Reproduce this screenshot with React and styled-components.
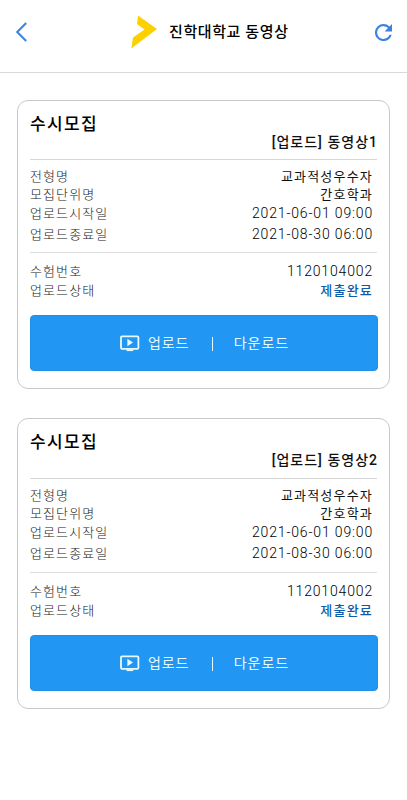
import React from 'react';
import styled, { createGlobalStyle } from 'styled-components';

const GlobalStyle = createGlobalStyle`
  * { box-sizing: border-box; }
  body {
    margin: 0;
    background: #fff;
    color: #111;
    font-family: Roboto, 'Noto Sans CJK KR', sans-serif;
  }
`;

const Screen = styled.div`
  min-height: 800px;
  background: #fff;
`;

const Header = styled.header`
  display: grid;
  grid-template-columns: 44px 1fr 44px;
  align-items: center;
  height: 73px;
  padding-bottom: 8px;
  border-bottom: 1px solid #d9d9d9;
`;

const IconButton = styled.button`
  display: flex;
  justify-content: ${(p) => (p.$end ? 'flex-end' : 'flex-start')};
  padding: 0 15px;
  border: 0;
  background: none;
  color: #3b82dc;

  svg { flex: none; }
`;

const Brand = styled.div`
  display: flex;
  align-items: center;
  gap: 11px;
  padding-left: 87px;
`;

const BrandName = styled.h1`
  margin: 0;
  font-size: 15px;
  font-weight: 500;
  line-height: 22px;
  letter-spacing: 0.6px;
  white-space: nowrap;
  color: #000;
`;

const List = styled.main`
  display: flex;
  flex-direction: column;
  gap: 29px;
  padding: 27px 17px 0 17px;
`;

const Card = styled.article`
  height: ${(p) => p.$height}px;
  padding: 12px 11px 0 12px;
  border: 1px solid #c9c9c9;
  border-radius: 11px;
`;

const CardHead = styled.div`
  display: flex;
  flex-direction: column;
  height: ${(p) => p.$height}px;
  margin-right: 1px;
  border-bottom: 1px solid #d6d6d6;
`;

const CardTitle = styled.h2`
  margin: 0;
  font-size: 17px;
  font-weight: 500;
  line-height: 22px;
  letter-spacing: 1.4px;
  color: #000;
`;

const CardSubtitle = styled.div`
  margin: -3px -1px 0 0;
  font-size: 14px;
  font-weight: 500;
  line-height: 20px;
  letter-spacing: 1px;
  text-align: right;
`;

const Group = styled.dl`
  margin: 0 1px 0 0;
  padding: ${(p) => p.$padding};
  border-bottom: ${(p) => (p.$divided ? '1px solid #dedede' : '0')};
`;

const Row = styled.div`
  display: flex;
  justify-content: space-between;
  align-items: center;
  height: ${(p) => p.$height}px;
  padding-right: 4px;
`;

const Label = styled.dt`
  font-size: 13px;
  font-weight: 300;
  line-height: 18px;
  letter-spacing: 1.1px;
  color: #222;
`;

const Value = styled.dd`
  margin: ${(p) => (p.$numeric ? '0 0 2px' : '0')};
  font-size: ${(p) => (p.$numeric ? 14 : 13)}px;
  font-weight: ${(p) => (p.$status ? 500 : p.$numeric ? 300 : 400)};
  line-height: 18px;
  letter-spacing: ${(p) => (p.$numeric ? 0.84 : 1.2)}px;
  color: ${(p) => (p.$status ? '#0b5cad' : p.$numeric ? '#000' : '#111')};
`;

const ActionBar = styled.div`
  display: flex;
  align-items: center;
  height: 56px;
  padding-left: 89px;
  border: 1px solid #1f8ee6;
  border-radius: 4px;
  background: #2196f3;
  color: #e6fbff;
`;

const Action = styled.button`
  display: flex;
  align-items: center;
  gap: 8px;
  padding: 0;
  border: 0;
  background: none;
  color: inherit;
  font: 400 14px/20px Roboto, 'Noto Sans CJK KR', sans-serif;
  letter-spacing: 0.9px;
`;

const Separator = styled.span`
  width: 1px;
  height: 14px;
  margin: 2px 20.5px 0 23px;
  background: #e6fbff;
`;

const BackIcon = () => (
  <svg width="12" height="20" viewBox="0 0 12 20" fill="none" stroke="currentColor" strokeWidth="2">
    <path d="M11.2 1 2.2 10l9 9" />
  </svg>
);

const RefreshIcon = () => (
  <svg width="17" height="17" viewBox="4 4 16 16" fill="currentColor">
    <path d="M17.65 6.35A7.96 7.96 0 0 0 12 4a8 8 0 1 0 7.73 10h-2.08A6 6 0 1 1 12 6c1.66 0 3.14.69 4.22 1.78L13 11h7V4l-2.35 2.35z" />
  </svg>
);

const BrandMark = () => (
  <svg width="27" height="34" viewBox="0 0 27 34" fill="#fdd000">
    <path d="M7 .5 26 14 .3 33.5 2 22.5 13.5 14.5 6 9z" />
  </svg>
);

const VideoIcon = () => (
  <svg width="20" height="17" viewBox="0 0 20 17" fill="none" stroke="currentColor" strokeWidth="1.8">
    <rect x="1" y="1.4" width="17.4" height="12.4" rx="1" />
    <path d="M6.6 15.2h6.6" />
    <path d="M7.4 3.8v7.4l5.6-3.7z" fill="currentColor" stroke="none" />
  </svg>
);

const details = [
  { label: '전형명', value: '교과적성우수자', height: 18 },
  { label: '모집단위명', value: '간호학과', height: 18 },
  { label: '업로드시작일', value: '2021-06-01 09:00', height: 20, numeric: true },
  { label: '업로드종료일', value: '2021-08-30 06:00', height: 21, numeric: true },
];

const submission = [
  { label: '수험번호', value: '1120104002', height: 19, numeric: true },
  { label: '업로드상태', value: '제출완료', height: 20, status: true },
];

const videos = [
  { name: '동영상1', height: 289, headHeight: 47, detailPadding: '8px 0 7px', statusPadding: '9px 0 14px' },
  { name: '동영상2', height: 291, headHeight: 48, detailPadding: '8px 0 8px', statusPadding: '9px 0 14px' },
];

const renderRow = (r) => (
  <Row key={r.label} $height={r.height}>
    <Label>{r.label}</Label>
    <Value $numeric={r.numeric} $status={r.status}>{r.value}</Value>
  </Row>
);

function VideoCard({ video }) {
  return (
    <Card $height={video.height}>
      <CardHead $height={video.headHeight}>
        <CardTitle>수시모집</CardTitle>
        <CardSubtitle>[업로드] {video.name}</CardSubtitle>
      </CardHead>
      <Group $divided $padding={video.detailPadding}>{details.map(renderRow)}</Group>
      <Group $padding={video.statusPadding}>{submission.map(renderRow)}</Group>
      <ActionBar>
        <Action><VideoIcon />업로드</Action>
        <Separator />
        <Action>다운로드</Action>
      </ActionBar>
    </Card>
  );
}

export default function App() {
  return (
    <Screen>
      <GlobalStyle />
      <Header>
        <IconButton aria-label="뒤로"><BackIcon /></IconButton>
        <Brand>
          <BrandMark />
          <BrandName>진학대학교 동영상</BrandName>
        </Brand>
        <IconButton $end aria-label="새로고침"><RefreshIcon /></IconButton>
      </Header>
      <List>
        {videos.map((v) => <VideoCard key={v.name} video={v} />)}
      </List>
    </Screen>
  );
}
